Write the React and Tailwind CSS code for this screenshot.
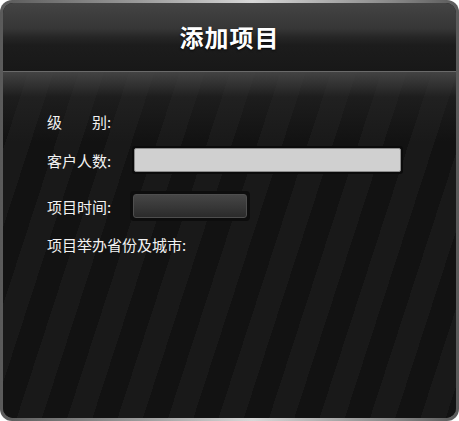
import React from "react";

const font = { fontFamily: '"Noto Sans CJK SC", "Noto Sans", sans-serif' };

const Label = ({ children, className = "" }) => (
  <span className={`text-[15px] leading-none text-[#f2f2f2] ${className}`}>{children}</span>
);

export default function App() {
  return (
    <div className="w-[459px] h-[421px] bg-white" style={font}>
      <div className="w-full h-full rounded-[12px] p-[3px] bg-[linear-gradient(to_right,#5a5a5a,#9a9a9a_30%,#d8d8d8_55%,#8a8a8a_85%,#5a5a5a)]">
        <div className="w-full h-full rounded-[10px] overflow-hidden flex flex-col bg-[#141414]">
          {/* header */}
          <div className="h-[69px] shrink-0 flex items-center justify-center border-b border-[#6a6a6a] bg-[linear-gradient(to_bottom,#444444_0%,#363636_38%,#262626_50%,#1c1c1c_62%,#181818_100%)]">
            <h1 className="text-[24px] font-bold text-white tracking-[1px] [text-shadow:0_1px_2px_rgba(0,0,0,0.8)]">
              添加项目
            </h1>
          </div>

          {/* body */}
          <div className="flex-1 pl-[44px] pt-[37px] bg-[linear-gradient(to_bottom,rgba(72,72,72,0.9)_0px,rgba(40,40,40,0.5)_25px,rgba(20,20,20,0)_70px),repeating-linear-gradient(108deg,#121212_0px,#121212_24px,#191919_24px,#191919_48px)]">
            <div className="h-[24px] flex items-center">
              <Label>
                级<span className="inline-block w-[30px]" />别:
              </Label>
            </div>

            <div className="h-[28px] mt-[13px] flex items-center">
              <Label className="w-[85px]">客户人数:</Label>
              <div className="w-[271px] h-[28px] p-[2px] rounded-[3px] bg-[#0b0b0b]">
                <div className="w-full h-full rounded-[2px] bg-[#d0d0d0] border border-[#8c8c8c]" />
              </div>
            </div>

            <div className="h-[30px] mt-[17px] flex items-center">
              <Label className="w-[83px]">项目时间:</Label>
              <div className="w-[120px] h-[30px] p-[3px] rounded-[4px] bg-[#0d0d0d]">
                <div className="w-full h-full rounded-[3px] border border-[#4e4e4e] bg-[linear-gradient(to_bottom,#464646,#2b2b2b)]" />
              </div>
            </div>

            <div className="h-[24px] mt-[11px] flex items-center">
              <Label>项目举办省份及城市:</Label>
            </div>
          </div>
        </div>
      </div>
    </div>
  );
}
